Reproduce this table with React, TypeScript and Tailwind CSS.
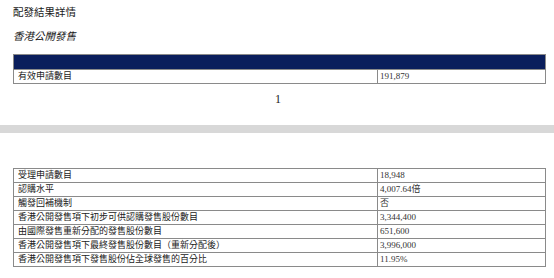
import React from "react";

const rows: [string, string][] = [
  ["受理申請數目", "18,948"],
  ["認購水平", "4,007.64倍"],
  ["觸發回補機制", "否"],
  ["香港公開發售項下初步可供認購發售股份數目", "3,344,400"],
  ["由國際發售重新分配的發售股份數目", "651,600"],
  ["香港公開發售項下最終發售股份數目（重新分配後）", "3,996,000"],
  ["香港公開發售項下發售股份佔全球發售的百分比", "11.95%"],
];

const sans = "font-['Liberation_Sans','Noto_Sans_CJK_TC',sans-serif]";
const serif = "font-['Liberation_Serif','Noto_Sans_CJK_TC',serif]";

export default function App() {
  return (
    <div className="w-[554px] h-[278px] bg-white overflow-hidden text-[#1a1a1a]">
      <div className={`${sans} pl-[13px] pt-[5px] text-[10.5px] leading-[14px]`}>配發結果詳情</div>
      <div className={`${sans} pl-[13px] mt-[10px] text-[10.5px] leading-[14px] italic`}>香港公開發售</div>
      <div className="mx-[13px] mt-[11px] w-[533px] border border-[#8a8a8a]">
        <div className="h-[14px] bg-[#0a1e5c]" />
        <div className="flex h-[14px] border-t border-[#8a8a8a]">
          <div className={`${sans} w-[364px] pl-[4px] text-[9px] leading-[13px] border-r border-[#8a8a8a]`}>有效申請數目</div>
          <div className={`${serif} flex-1 pl-[2px] text-[9px] leading-[13px] text-[#333]`}>191,879</div>
        </div>
      </div>
      <div className={`${serif} mt-[8px] text-center text-[12px] leading-[14px] pl-[2px]`}>1</div>
      <div className="mt-[19px] h-[8px] bg-[#d8d8d8]" />
      <div className="mx-[13px] mt-[35px] w-[533px] border border-[#8a8a8a]">
        {rows.map(([label, value], i) => (
          <div key={i} className={i > 0 ? "flex h-[14px] border-t border-[#8a8a8a]" : "flex h-[13px]"}>
            <div className={`${sans} w-[364px] pl-[4px] text-[9px] leading-[13px] border-r border-[#8a8a8a]`}>{label}</div>
            <div className={`${serif} flex-1 pl-[2px] text-[9px] leading-[13px] text-[#333]`}>{value}</div>
          </div>
        ))}
      </div>
    </div>
  );
}
